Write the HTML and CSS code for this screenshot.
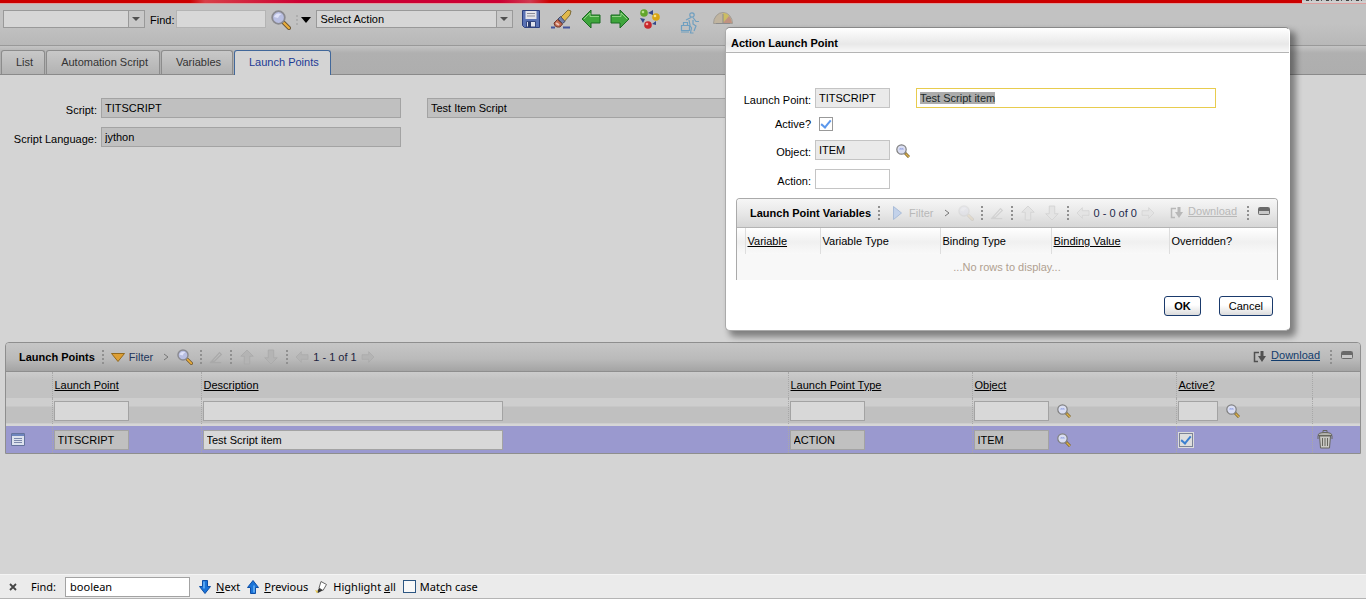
FILE: index.html
```html
<!DOCTYPE html>
<html lang="en">
<head>
    <meta charset="UTF-8">
    <meta name="viewport" content="width=device-width, initial-scale=1.0">
    <title>Automation Scripts</title>
    <link rel="stylesheet" href="styles.css">
</head>
<body>
    <!-- shared icons -->
    <svg class="defs" width="0" height="0" aria-hidden="true">
        <symbol id="lens" viewBox="0 0 20 20">
            <path d="M12 12l6 6" stroke="#6d5530" stroke-width="4" stroke-linecap="round"/>
            <path d="M13 13l5 5" stroke="#eaae3c" stroke-width="2.200" stroke-linecap="round"/>
            <circle cx="7.500" cy="7.500" r="6.300" fill="#b9bfe2" stroke="#8a8a90" stroke-width="1.800"/>
            <path d="M3 7q2-5 7.500-3Q8 5 7 8z" fill="#dfe2f8"/>
        </symbol>
        <symbol id="lens-small" viewBox="0 0 14 14">
            <path d="M9 9l4 4" stroke="#7a6330" stroke-width="3"/>
            <path d="M9.500 9.500l3.500 3.500" stroke="#d8b04c" stroke-width="1.500"/>
            <circle cx="5.500" cy="5.500" r="4.700" fill="#dadef2" stroke="#808080" stroke-width="1.200"/>
            <path d="M3 5.500q1-2.500 2.500-1 1.500-1.500 2.500 1z" fill="#98a6e4"/>
        </symbol>
        <symbol id="arrow" viewBox="0 0 20 18">
            <path d="M1 9L9 1v4.500h10v7H9V17z" stroke-linejoin="round"/>
        </symbol>
        <symbol id="pencil" viewBox="0 0 16 16">
            <path d="M3 13L12 3l2 2-8 8zM1 14.500h13" fill="none" stroke="currentColor" stroke-width="1.500"/>
        </symbol>
        <symbol id="export" viewBox="0 0 14 12">
            <path d="M5 1.500H1.500v9H5M3 1.500h3" fill="none" stroke="currentColor" stroke-width="1.500"/>
            <path d="M7.500 0h3v5H13L9 11 5 5h2.500z" fill="currentColor"/>
        </symbol>
        <symbol id="minimize" viewBox="0 0 12 8">
            <rect x=".5" y=".5" width="11" height="7" rx="1" fill="#c8c8c8" stroke="#6a6a6a"/>
            <path d="M1 1h10v3H1z" fill="#6a6a6a"/>
        </symbol>
        <symbol id="down" viewBox="0 0 12 14">
            <path d="M3.500 .5h5v6h3L6 13.500.5 6.500h3z" fill="#1b74d8" stroke="#0d4ea6"/>
            <path d="M5 1.500v7" stroke="#6db6f8" stroke-width="1.500"/>
        </symbol>
    </svg>

    <div class="masthead"><span class="masthead-end"></span></div>

    <div class="toolbar">
        <span class="combo combo-find"><select aria-label="Saved queries"><option></option></select></span>
        <label for="quickFind">Find:</label>
        <input type="text" id="quickFind" class="quick-find">
        <button class="icon-btn" aria-label="Search"><svg width="20" height="20"><use href="#lens"/></svg></button>
        <span class="dots dots-short"></span>
        <button class="icon-btn caret" aria-label="Search options"><svg width="10" height="6" viewBox="0 0 10 6"><path d="M0 0h10L5 6z"/></svg></button>
        <span class="combo combo-action"><select aria-label="Action"><option>Select Action</option></select></span>
        <div class="tools">
            <button class="icon-btn" aria-label="Save">
                <svg width="20" height="20" viewBox="0 0 20 20">
                    <path d="M1.500 1.500h17v17h-15l-2-2z" fill="#5a72b4" stroke="#2c3f7e"/>
                    <path d="M4.500 2h11v8h-11z" fill="#e4e4ea"/>
                    <path d="M6 4.500h8M6 7h8" stroke="#8d8d98"/>
                    <path d="M5.500 12.500h9V18h-9z" fill="#dfe2ec" stroke="#35477f"/>
                    <path d="M7 13h3v5H7z" fill="#2d3d70"/>
                </svg>
            </button>
            <button class="icon-btn" aria-label="Clear changes">
                <svg width="22" height="20" viewBox="0 0 22 20">
                    <path d="M1 18.500h4M13 18.500h7" stroke="#44559c" stroke-width="2"/>
                    <path d="M10 9L18 1l3 1-1 4-7 8z" fill="#e0b84c" stroke="#7c6a36"/>
                    <path d="M8 10l2.500-2.500 4.500 5-2.500 2z" fill="#7381ac" stroke="#454c68"/>
                    <path d="M7.500 10.500l5 4.500-2.500 3H7q-3-1-3-4z" fill="#c2694f" stroke="#71382c"/>
                    <path d="M6 14l3 2" stroke="#ecc6b8" stroke-width="2"/>
                </svg>
            </button>
            <button class="icon-btn" aria-label="Previous record"><svg class="green" width="20" height="20" viewBox="0 0 20 20"><path d="M1 10L10 1v5h9v8h-9v5z"/><path class="shine" d="M3 10l6-6v3.500h9"/></svg></button>
            <button class="icon-btn" aria-label="Next record"><svg class="green flip" width="20" height="20" viewBox="0 0 20 20"><path d="M1 10L10 1v5h9v8h-9v5z"/><path class="shine" d="M3 10l6-6v3.500h9"/></svg></button>
            <button class="icon-btn" aria-label="Route workflow">
                <svg width="22" height="20" viewBox="0 0 22 20">
                    <circle cx="5" cy="4" r="3.800" fill="#62a52c"/><circle cx="4" cy="3" r="1.300" fill="#bbe28c"/>
                    <circle cx="17" cy="8" r="3.800" fill="#d9a514"/><circle cx="16" cy="7" r="1.300" fill="#f8e48a"/>
                    <circle cx="9" cy="16" r="3.800" fill="#c8272c"/><circle cx="8" cy="15" r="1.300" fill="#f2a09c"/>
                    <path d="M9 4l5-3v5zM1 9l5 1-2 4zM13 15l4-3v4z" fill="#33478a"/>
                </svg>
            </button>
            <button class="icon-btn runner" aria-label="Run workflow">
                <svg width="20" height="22" viewBox="0 0 20 22">
                    <g fill="none" stroke="#6f9fc0" stroke-width="1.200">
                        <circle cx="12" cy="3" r="2.200"/>
                        <path d="M13 5.500l3 4h3M11 5.500L6 8M9 8l1 5M13 8v4l3 2-2 5M9.500 13l2 3-1 5h3"/>
                        <path d="M1.500 13.500h8v5h-8zM3.500 13.500v-3h4v3M1 20h8"/>
                    </g>
                </svg>
            </button>
            <button class="icon-btn gauge" aria-label="Performance">
                <svg width="20" height="14" viewBox="0 0 20 14">
                    <path d="M.5 12.500a9.500 11 0 0 1 19 0z" fill="#c0b49f" stroke="#a09c94"/>
                    <path d="M10 12V2q4 0 6 3z" fill="#ccbd62"/>
                    <path d="M10 12l6-7q2.500 3 3 7z" fill="#c0917f"/>
                    <path d="M10 12V3M3 12.500h14" stroke="#8c8c8c"/>
                </svg>
            </button>
        </div>
    </div>

    <nav class="tabs">
        <a href="#">List</a>
        <a href="#">Automation Script</a>
        <a href="#">Variables</a>
        <a href="#" class="active">Launch Points</a>
    </nav>

    <main class="content">
        <form class="script-form">
            <label for="script">Script:</label>
            <input type="text" id="script" value="TITSCRIPT" readonly>
            <input type="text" class="script-desc" aria-label="Script description" value="Test Item Script" readonly>
            <label for="language">Script Language:</label>
            <input type="text" id="language" value="jython" readonly>
        </form>

        <section class="panel">
            <header class="panel-bar">
                <h2>Launch Points</h2>
                <span class="dots"></span>
                <button class="text-btn"><svg width="14" height="9" viewBox="0 0 14 9"><path d="M.5.5h13L7 8.500z" fill="#dd9f35" stroke="#93691d"/></svg>Filter</button>
                <svg class="chevron" width="6" height="8" viewBox="0 0 6 8"><path d="M1 1l4 3-4 3"/></svg>
                <button class="icon-btn" aria-label="Search launch points"><svg width="16" height="16"><use href="#lens"/></svg></button>
                <span class="dots"></span>
                <svg class="faded" width="14" height="14"><use href="#pencil"/></svg>
                <span class="dots"></span>
                <svg class="faded up" width="16" height="14"><use href="#arrow"/></svg>
                <svg class="faded dn" width="16" height="14"><use href="#arrow"/></svg>
                <span class="dots"></span>
                <span class="pager">
                    <svg class="faded" width="14" height="12"><use href="#arrow"/></svg>
                    1 - 1 of 1
                    <svg class="faded flip" width="14" height="12"><use href="#arrow"/></svg>
                </span>
                <span class="bar-end">
                    <svg width="14" height="12"><use href="#export"/></svg>
                    <a href="#">Download</a>
                    <span class="dots"></span>
                    <svg class="min" width="12" height="8"><use href="#minimize"/></svg>
                </span>
            </header>
            <table class="grid">
                <colgroup>
                    <col class="c-first"><col class="c-point"><col><col class="c-type"><col class="c-object"><col class="c-active"><col class="c-icon">
                </colgroup>
                <thead>
                    <tr>
                        <th></th>
                        <th><a href="#">Launch Point</a></th>
                        <th><a href="#">Description</a></th>
                        <th><a href="#">Launch Point Type</a></th>
                        <th><a href="#">Object</a></th>
                        <th><a href="#">Active?</a></th>
                        <th></th>
                    </tr>
                </thead>
                <tbody>
                    <tr class="filter-row">
                        <td></td>
                        <td><input type="text" class="short" aria-label="Filter launch point"></td>
                        <td><input type="text" class="long" aria-label="Filter description"></td>
                        <td><input type="text" class="short" aria-label="Filter type"></td>
                        <td><div class="lookup"><input type="text" class="short" aria-label="Filter object"><svg width="14" height="14"><use href="#lens-small"/></svg></div></td>
                        <td><div class="lookup"><input type="text" class="tiny" aria-label="Filter active"><svg width="14" height="14"><use href="#lens-small"/></svg></div></td>
                        <td></td>
                    </tr>
                    <tr class="selected">
                        <td class="detail">
                            <svg width="14" height="13" viewBox="0 0 14 13">
                                <path d="M.5.5h13v12H.5z" fill="#dde2ee" stroke="#65729c"/>
                                <path d="M1 1h12v2H1z" fill="#6d84bd"/>
                                <path d="M3 5.500h8M3 7.500h8M3 9.500h8" stroke="#7c88ab"/>
                            </svg>
                        </td>
                        <td><input type="text" class="short" aria-label="Launch point" value="TITSCRIPT" readonly></td>
                        <td><input type="text" class="long" aria-label="Description" value="Test Script item"></td>
                        <td><input type="text" class="short" aria-label="Type" value="ACTION" readonly></td>
                        <td><div class="lookup"><input type="text" class="short" aria-label="Object" value="ITEM" readonly><svg width="14" height="14"><use href="#lens-small"/></svg></div></td>
                        <td><input type="checkbox" class="check" aria-label="Active" checked></td>
                        <td class="trash">
                            <svg width="16" height="19" viewBox="0 0 16 19">
                                <path d="M2.500 6h11l-1 12h-9z" fill="#c9c9c4" stroke="#66665e"/>
                                <path d="M1 5.500q0-3 7-3t7 3z" fill="#b4b4ae" stroke="#66665e"/>
                                <path d="M6 2.500V.5h4v2M1 6v3M15 6v3M5.500 8v8M8 8v8M10.500 8v8" fill="none" stroke="#66665e"/>
                            </svg>
                        </td>
                    </tr>
                </tbody>
            </table>
        </section>
    </main>

    <!-- dialog floating over the page -->
    <div class="dialog" role="dialog" aria-labelledby="dialogTitle">
        <h1 id="dialogTitle">Action Launch Point</h1>
        <div class="dialog-form">
            <label for="dPoint">Launch Point:</label>
            <div class="row"><input type="text" id="dPoint" class="short" value="TITSCRIPT" readonly><input type="text" id="dDesc" class="focused" aria-label="Description" value="Test Script item"></div>
            <label for="dActive">Active?</label>
            <div class="row row-check"><input type="checkbox" id="dActive" class="check" checked></div>
            <label for="dObject">Object:</label>
            <div class="row lookup"><input type="text" id="dObject" class="short" value="ITEM" readonly><svg width="14" height="14"><use href="#lens-small"/></svg></div>
            <label for="dAction">Action:</label>
            <div class="row"><input type="text" id="dAction" class="short"></div>
        </div>

        <section class="panel panel-light">
            <header class="panel-bar">
                <h2>Launch Point Variables</h2>
                <span class="dots"></span>
                <button class="text-btn" disabled><svg width="9" height="14" viewBox="0 0 9 14"><path d="M.5.5v13L8.500 7z" fill="#c3d2ea" stroke="#a9bcd8"/></svg>Filter</button>
                <svg class="chevron" width="6" height="8" viewBox="0 0 6 8"><path d="M1 1l4 3-4 3"/></svg>
                <svg class="ghost" width="16" height="16"><use href="#lens"/></svg>
                <span class="dots"></span>
                <svg class="faded" width="14" height="14"><use href="#pencil"/></svg>
                <span class="dots"></span>
                <svg class="faded up" width="16" height="14"><use href="#arrow"/></svg>
                <svg class="faded dn" width="16" height="14"><use href="#arrow"/></svg>
                <span class="dots"></span>
                <span class="pager">
                    <svg class="faded" width="14" height="12"><use href="#arrow"/></svg>
                    0 - 0 of 0
                    <svg class="faded flip" width="14" height="12"><use href="#arrow"/></svg>
                </span>
                <span class="bar-end">
                    <svg width="14" height="12"><use href="#export"/></svg>
                    <a href="#">Download</a>
                    <span class="dots"></span>
                    <svg class="min" width="12" height="8"><use href="#minimize"/></svg>
                </span>
            </header>
            <table class="grid">
                <colgroup>
                    <col class="v-pad"><col class="v-name"><col class="v-type"><col class="v-bind"><col class="v-value"><col>
                </colgroup>
                <thead>
                    <tr>
                        <th></th>
                        <th><a href="#">Variable</a></th>
                        <th>Variable Type</th>
                        <th>Binding Type</th>
                        <th><a href="#">Binding Value</a></th>
                        <th>Overridden?</th>
                    </tr>
                </thead>
                <tbody>
                    <tr><td colspan="6" class="empty">...No rows to display...</td></tr>
                </tbody>
            </table>
        </section>

        <div class="dialog-buttons">
            <button class="btn btn-default">OK</button>
            <button class="btn">Cancel</button>
        </div>
    </div>

    <footer class="findbar">
        <button class="icon-btn" aria-label="Close"><svg width="8" height="8" viewBox="0 0 8 8"><path d="M1 1l6 6M7 1L1 7" stroke="#444" stroke-width="1.800"/></svg></button>
        <label for="pageFind">Find:</label>
        <input type="text" id="pageFind" value="boolean">
        <button class="find-btn"><svg width="12" height="14"><use href="#down"/></svg><span><u>N</u>ext</span></button>
        <button class="find-btn"><svg class="turn" width="12" height="14"><use href="#down"/></svg><span><u>P</u>revious</span></button>
        <button class="find-btn">
            <svg width="13" height="14" viewBox="0 0 13 14">
                <path d="M6 1.500l5.500 3-3.500 6-4-2.500z" fill="#fff" stroke="#666"/>
                <path d="M4 8l3.500 2.500L3 13l-1-1z" fill="#333"/>
                <path d="M0 10l3 1-1 2.500z" fill="#e7c646"/>
            </svg>
            <span>Highlight <u>a</u>ll</span>
        </button>
        <label class="match"><input type="checkbox"><span>Mat<u>c</u>h case</span></label>
    </footer>

    <script>
        // description is ready for typing when the dialog opens
        document.getElementById('dDesc').select();
    </script>
</body>
</html>
```
FILE: styles.css
```css
*, *::before, *::after {
    box-sizing: border-box;
}
body {
    margin: 0;
    min-height: 100vh;
    display: flex;
    flex-direction: column;
    background-color: #d4d4d4;
    color: #000;
    font-family: "Liberation Sans", Arial, sans-serif;
    font-size: 11px;
    line-height: 13px;
}
input, select, button {
    font: inherit;
    color: inherit;
}
svg {
    display: block;
    flex: none;
}
a {
    color: inherit;
}
.defs {
    position: absolute;
}
input[type="text"] {
    height: 20px;
    padding: 0 3px;
    border: 1px solid #a3a3a3;
    border-radius: 0;
    background-color: #d8d8d8;
    outline: none;
}
input[readonly] {
    background-color: #c0c0c0;
}
.icon-btn, .text-btn, .find-btn {
    display: flex;
    align-items: center;
    padding: 0;
    border: none;
    background: none;
}
.short {
    width: 75px;
}
.long {
    width: 300px;
}
.tiny {
    width: 40px;
}

/* masthead and toolbar */
.masthead {
    display: flex;
    justify-content: flex-end;
    height: 3px;
    background: linear-gradient(90deg, #cc0000 190px, #d84048 205px, #cc0033 300px, #cc0033 500px, #d03a50 530px, #cc0000 550px);
}
.masthead-end {
    width: 64px;
    background: repeating-linear-gradient(90deg, #c4c4c4 0 4px, #444 4px 7px, #c4c4c4 7px 9px, #555 9px 10px);
    border-bottom: 2px solid #cfcfcf;
}
.toolbar {
    display: flex;
    align-items: flex-start;
    height: 43px;
    padding: 6px 3px 0;
    border-top: 1px solid #dca0a0;
    border-bottom: 1px solid #999;
    background: linear-gradient(#c2c2c2 20px, #b8b8b8);
}
.toolbar > label {
    margin: 4px 2px 0 5px;
}
.toolbar .quick-find {
    width: 90px;
    height: 18px;
    margin-right: 5px;
    border-color: #b4b4b4;
}
.combo {
    position: relative;
}
.combo select {
    display: block;
    width: 100%;
    height: 18px;
    padding: 0 20px 0 3px;
    appearance: none;
    border: 1px solid #999;
    border-radius: 0;
    background-color: #d6d6d6;
}
.combo::before {
    content: "";
    position: absolute;
    top: 0;
    right: 0;
    width: 17px;
    height: 18px;
    border: 1px solid #999;
    background-color: #c8c8c8;
    pointer-events: none;
}
.combo::after {
    content: "";
    position: absolute;
    top: 7px;
    right: 5px;
    width: 8px;
    border: 4px solid transparent;
    border-top: 4px solid #505050;
    border-bottom: none;
    pointer-events: none;
}
.combo-find {
    width: 142px;
}
.combo-action {
    width: 197px;
    margin-left: 5px;
}
.dots {
    width: 2px;
    height: 14px;
    margin: 0 7px;
    flex: none;
    background: repeating-linear-gradient(#909090 0 2px, transparent 2px 4px);
}
.dots-short {
    height: 10px;
    margin: 5px 3px 0 5px;
    opacity: .4;
}
.caret {
    height: 20px;
}
.tools {
    display: flex;
    align-items: flex-start;
    gap: 9px;
    margin: -1px 0 0 8px;
}
.tools .runner {
    margin: 3px 4px 0 10px;
}
.tools .gauge {
    margin-top: 2px;
}
.green {
    fill: #3fa53c;
    stroke: #1b6b22;
    stroke-linejoin: round;
}
.green .shine {
    fill: none;
    stroke: #8fd184;
}
.flip {
    transform: scaleX(-1);
}

/* tabs */
.tabs {
    display: flex;
    align-items: flex-end;
    gap: 1px;
    height: 29px;
    padding-left: 1px;
    border-bottom: 1px solid #8a8a8a;
    background: linear-gradient(#c4c4c4, #b0b0b0 7px, #aeaeae);
}
.tabs a {
    height: 24px;
    padding: 5px 11px 0 14px;
    border: 1px solid #8c8c8c;
    border-bottom: none;
    border-radius: 3px 3px 0 0;
    background: linear-gradient(#c8c8c8, #b2b2b2);
    color: #333;
    text-decoration: none;
}
.tabs .active {
    height: 25px;
    margin-bottom: -1px;
    border-color: #42689a;
    background: #d4d4d4;
    color: #1c3a94;
}

/* script header */
.content {
    flex: 1;
    padding: 23px 5px 0;
}
.script-form {
    display: grid;
    grid-template-columns: 92px 300px 322px;
    column-gap: 4px;
    row-gap: 9px;
}
.script-form label {
    padding-top: 6px;
    text-align: right;
}
.script-desc {
    margin-left: 22px;
}

/* panels */
.panel {
    margin-top: 195px;
    border: 1px solid #8e8e8e;
    border-radius: 4px 4px 0 0;
}
.panel-bar {
    display: flex;
    align-items: center;
    height: 29px;
    padding: 0 7px 0 13px;
    border-bottom: 1px solid #8e8e8e;
    border-radius: 3px 3px 0 0;
    background: linear-gradient(#c6c6c6, #bababa 16px, #a4a4a4);
}
.panel-bar h2 {
    margin: 0;
    font-size: 11px;
    white-space: nowrap;
}
.text-btn {
    gap: 4px;
    color: #22365c;
}
.chevron {
    margin: 0 8px 0 10px;
    fill: none;
    stroke: #777;
}
.faded {
    color: #a9a9a9;
    fill: #b4b4b4;
    stroke: #a9a9a9;
}
.up {
    margin-right: 8px;
    transform: rotate(90deg);
}
.dn {
    transform: rotate(-90deg);
}
.pager {
    display: flex;
    align-items: center;
    gap: 4px;
    color: #1e2440;
    white-space: nowrap;
}
.bar-end {
    display: flex;
    align-items: center;
    gap: 4px;
    margin-left: auto;
    color: #505050;
}
.bar-end a {
    padding-bottom: 4px;
    color: #123c6c;
}
.bar-end .dots {
    margin: 0 5px 0 6px;
}
.min {
    margin-bottom: 4px;
}
.grid {
    width: 100%;
    border-collapse: collapse;
    table-layout: fixed;
}
.grid th {
    height: 26px;
    padding: 0 2px;
    border-left: 1px dotted #a8a8a8;
    font-weight: normal;
    text-align: left;
}
.grid td {
    height: 28px;
    padding: 0 1px;
    border-left: 1px dotted #a8a8a8;
}
.grid th:first-child, .grid td:first-child {
    border-left: none;
}
.grid td input {
    display: block;
}
.grid thead tr {
    background: linear-gradient(#cccccc, #c2c2c2 8px);
}
.filter-row {
    background: linear-gradient(#cecece 8px, #c0c0c0 9px);
    border-bottom: 2px solid #d6d6d6;
}
.grid .filter-row td {
    height: 27px;
}
.selected {
    background-color: #9a99cf;
}
.c-first {
    width: 46px;
}
.c-icon {
    width: 48px;
}
.c-point {
    width: 149px;
}
.c-type {
    width: 184px;
}
.c-object {
    width: 204px;
}
.c-active {
    width: 136px;
}
.lookup {
    display: flex;
    align-items: center;
    gap: 8px;
}
.grid .detail {
    padding-left: 5px;
}
.grid .trash {
    padding-left: 4px;
}
.check {
    appearance: none;
    width: 14px;
    height: 14px;
    margin: 0;
    border: 1px solid #7d8496;
    background-color: #dedede;
}
.check:checked::before {
    content: "";
    display: block;
    width: 6px;
    height: 10px;
    margin: 0 0 0 3px;
    border: solid #3b7fd0;
    border-width: 0 2px 2px 0;
    transform: rotate(40deg);
}
.grid .check {
    outline: 1px solid #dcdcdc;
    margin-left: 1px;
}

/* dialog */
.dialog {
    position: absolute;
    top: 27px;
    left: 725px;
    width: 565px;
    padding-bottom: 14px;
    border: 1px solid #999;
    border-color: #888 #fff #aaa #aaa;
    border-radius: 5px;
    background-color: #fff;
    box-shadow: 5px 5px 6px 1px rgba(0,0,0,0.4);
}
.dialog h1 {
    height: 25px;
    margin: 0;
    padding: 9px 5px 0;
    border-bottom: 1px solid #b4b4b4;
    border-radius: 5px 5px 0 0;
    background: linear-gradient(#ffffff, #e8e8e8 16px, #f8f8f8);
    font-size: 11px;
}
.dialog-form {
    display: grid;
    grid-template-columns: 85px 1fr;
    column-gap: 4px;
    row-gap: 9px;
    padding-top: 35px;
}
.dialog-form label {
    padding-top: 6px;
    text-align: right;
}
.dialog-form input {
    background-color: #fff;
    border-color: #c4c4c4;
}
.dialog-form input[readonly] {
    background-color: #eaeaea;
}
.dialog-form .check {
    border-color: #999;
}
.dialog-form .check::before {
    border-color: #5b97ec;
}
.dialog-form .focused {
    width: 300px;
    margin-left: 26px;
    border-color: #e8cc4e;
}
.focused::selection {
    background-color: #acacac;
    color: #1c2a2a;
}
.dialog-form .row {
    display: flex;
    align-items: center;
    height: 20px;
}
.dialog-form .row-check {
    height: 14px;
    padding-left: 4px;
}
.dialog-form label[for="dActive"] {
    padding-top: 1px;
}
.dialog-form .lookup {
    gap: 6px;
}
.dialog-form .lookup svg {
    margin-top: 2px;
}
.panel-light {
    margin: 9px 11px 0 10px;
    border-color: #aaa;
    border-bottom: none;
}
.panel-light .panel-bar {
    border-color: #b4b4b4;
    background: linear-gradient(#f6f6f6, #e8e8e8 14px, #d6d6d6);
}
.panel-light .text-btn {
    gap: 7px;
    margin-left: 6px;
}
.panel-light .text-btn, .panel-light .bar-end, .panel-light .bar-end a {
    color: #b8b8b8;
}
.panel-light .pager {
    color: #22284c;
}
.panel-light .faded {
    color: #d2d2d2;
    fill: #e4e4e4;
    stroke: #d0d0d0;
}
.ghost {
    opacity: .12;
}
.panel-light thead tr {
    background: linear-gradient(#fff, #f0f0f0 14px, #f9f9f9);
}
.panel-light th {
    height: 26px;
    border-left: 1px solid #dedede;
}
.panel-light .empty {
    height: 26px;
    background-color: #f8f8f8;
    color: #b0a090;
    text-align: center;
}
.v-pad {
    width: 8px;
}
.v-name {
    width: 75px;
}
.v-type {
    width: 120px;
}
.v-bind {
    width: 111px;
}
.v-value {
    width: 118px;
}
.dialog-buttons {
    display: flex;
    justify-content: flex-end;
    gap: 18px;
    padding: 16px 16px 0 0;
}
.btn {
    height: 20px;
    padding: 0 9px;
    border: 1px solid #1a3a6c;
    border-radius: 3px;
    background: linear-gradient(#fff 8px, #dcdcdc);
}
.btn-default {
    font-weight: bold;
}

/* browser find bar */
.findbar {
    display: flex;
    align-items: center;
    height: 25px;
    padding-left: 9px;
    border-top: 1px solid #f4f4f4;
    border-bottom: 1px solid #b4b4b4;
    background-color: #ebebeb;
    font-family: "Noto Sans", Tahoma, sans-serif;
}
.findbar > label {
    margin-left: 14px;
}
.findbar #pageFind {
    width: 125px;
    margin: 0 9px;
    padding: 0 4px;
    background-color: #fff;
}
.find-btn {
    gap: 5px;
    margin-right: 7px;
}
.turn {
    transform: rotate(180deg);
}
.findbar .match {
    display: flex;
    align-items: center;
    gap: 4px;
    margin-left: 0;
}
.match input {
    appearance: none;
    width: 13px;
    height: 13px;
    margin: 0;
    border: 1px solid #2c5682;
    background-color: #f8f8f8;
}
```
